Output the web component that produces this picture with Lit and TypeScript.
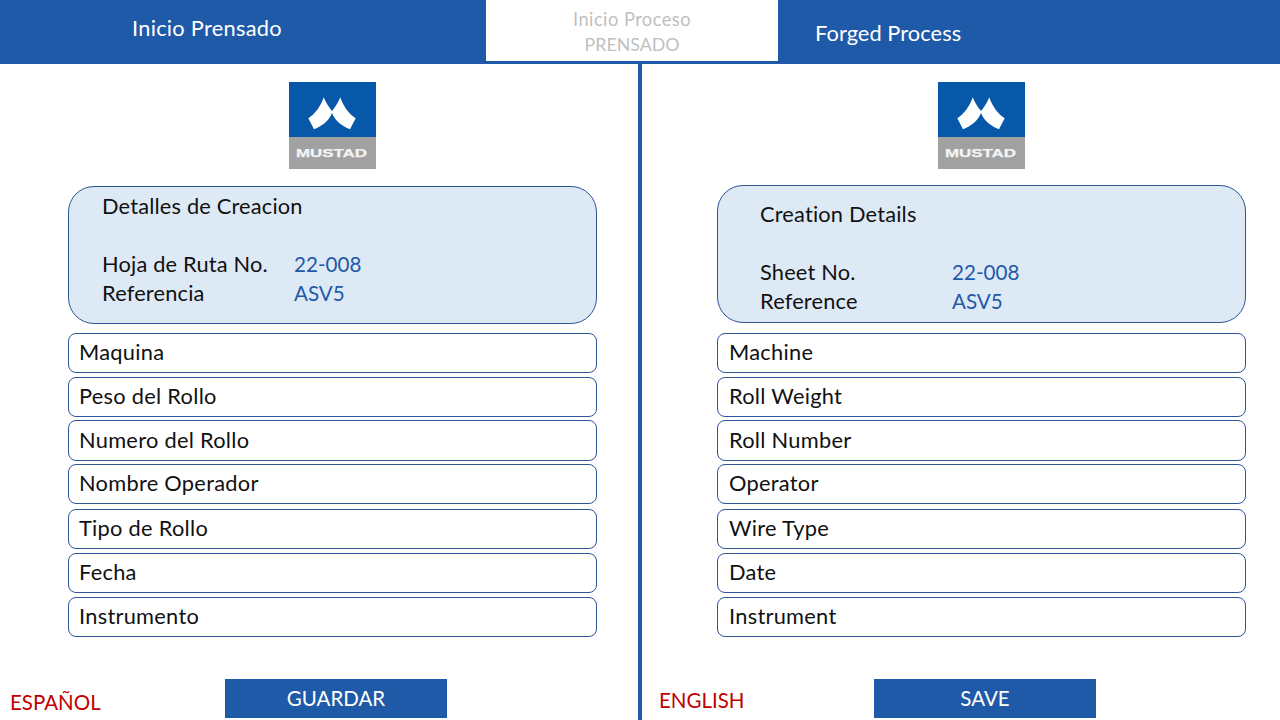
import { LitElement, css, html } from "lit";
import { customElement, property } from "lit/decorators.js";

interface PanelData {
  side: "es" | "en";
  title: string;
  sheetLabel: string;
  refLabel: string;
  fields: string[];
  lang: string;
  save: string;
}

const SPANISH: PanelData = {
  side: "es",
  title: "Detalles de Creacion",
  sheetLabel: "Hoja de Ruta No.",
  refLabel: "Referencia",
  fields: [
    "Maquina",
    "Peso del Rollo",
    "Numero del Rollo",
    "Nombre Operador",
    "Tipo de Rollo",
    "Fecha",
    "Instrumento",
  ],
  lang: "ESPAÑOL",
  save: "GUARDAR",
};

const ENGLISH: PanelData = {
  side: "en",
  title: "Creation Details",
  sheetLabel: "Sheet No.",
  refLabel: "Reference",
  fields: [
    "Machine",
    "Roll Weight",
    "Roll Number",
    "Operator",
    "Wire Type",
    "Date",
    "Instrument",
  ],
  lang: "ENGLISH",
  save: "SAVE",
};

@customElement("detail-panel")
export class DetailPanel extends LitElement {
  @property({ type: Object }) data: PanelData = SPANISH;

  renderLogo() {
    return html`<svg class="logo" viewBox="0 0 87 87" width="87" height="87">
      <rect width="87" height="55" fill="#0758a8"></rect>
      <rect y="55" width="87" height="32" fill="#a1a1a1"></rect>
      <path
        fill="#fff"
        d="M34.7 15.3 C36.5 20 39.5 25 43 29 C46.5 25 49.5 20 51.3 15.3 C54 24 60 32 66.7 36.3 L61 47.3 C53 44 46 39 43 31 C40 39 33 44 25 47.3 L19.3 36.3 C26 32 32 24 34.7 15.3 Z"
      ></path>
      <text class="logo__word" x="7" y="75" textLength="71" lengthAdjust="spacingAndGlyphs">MUSTAD</text>
    </svg>`;
  }

  render() {
    const d = this.data;
    return html`
      <section class="panel panel--${d.side}">
        <div class="panel__logo">${this.renderLogo()}</div>
        <div class="card">
          <div class="card__title">${d.title}</div>
          <div class="card__grid">
            <span>${d.sheetLabel}</span><span class="card__value">22-008</span>
            <span>${d.refLabel}</span><span class="card__value">ASV5</span>
          </div>
        </div>
        <div class="fields">
          ${d.fields.map((f) => html`<div class="field">${f}</div>`)}
        </div>
        <div class="footer">
          <span class="footer__lang">${d.lang}</span>
          <div class="footer__save">${d.save}</div>
        </div>
      </section>
    `;
  }

  static styles = css`
    :host {
      display: block;
      font-family: Lato, "Liberation Sans", sans-serif;
      font-size: 21.8px;
      letter-spacing: 0.28px;
      color: #111;
    }

    .panel {
      --inset: 68px;
      --card-top: 17px;
      --card-title-pad: 6px;
      --card-left: 33px;
      --field-left: 10px;
      --value-col: 192px;
      --save-left: 157px;
      --lang-left: 10px;
      --lang-top: 8px;
      padding: 18px 0 0 var(--inset);
    }

    .panel--en {
      --inset: 75px;
      --card-top: 16px;
      --card-title-pad: 15px;
      --card-left: 42px;
      --field-left: 11px;
      --lang-left: 17px;
      --lang-top: 6px;
    }

    .panel__logo {
      width: 529px;
      display: flex;
      justify-content: center;
    }

    .logo {
      display: block;
    }

    .logo__word {
      font-family: "Liberation Sans", sans-serif;
      font-weight: 700;
      font-size: 11px;
      letter-spacing: 0;
      fill: #f4f4f4;
      stroke: #f4f4f4;
      stroke-width: 0.25px;
    }

    .card {
      box-sizing: border-box;
      width: 529px;
      height: 138px;
      margin-top: var(--card-top);
      padding: var(--card-title-pad) 0 0 var(--card-left);
      border: 1px solid #2f5597;
      border-radius: 26px;
      background: #dee9f6;
      letter-spacing: 0.18px;
    }

    .card__title {
      line-height: 26px;
    }

    .card__grid {
      display: grid;
      grid-template-columns: var(--value-col) auto;
      grid-auto-rows: 29px;
      justify-content: start;
      align-items: baseline;
      margin-top: 31px;
      line-height: 28px;
    }

    .card__value {
      color: #1f5aa8;
      font-size: 20.6px;
      letter-spacing: 0;
    }

    .fields {
      display: flex;
      flex-direction: column;
      width: 529px;
      margin-top: 9px;
      gap: 4px;
    }

    .panel--en .fields {
      margin-top: 10px;
    }

    .field {
      box-sizing: border-box;
      height: 40px;
      padding-left: var(--field-left);
      border: 1px solid #2f5597;
      border-radius: 8px;
      line-height: 35px;
      background: #fff;
    }

    .field:nth-child(3) {
      height: 41px;
      margin-top: -1px;
      line-height: 37px;
    }

    .field:nth-child(4) {
      margin-top: -1px;
    }

    .field:nth-child(5) {
      margin-top: 1px;
    }

    .footer {
      display: flex;
      align-items: flex-start;
      margin: 42px 0 0 calc(var(--lang-left) - var(--inset));
      font-size: 20.5px;
      letter-spacing: 0;
    }

    .footer__lang {
      width: calc(var(--inset) + var(--save-left) - var(--lang-left));
      padding-top: var(--lang-top);
      line-height: 30px;
      color: #c00000;
    }

    .footer__save {
      width: 222px;
      height: 39px;
      line-height: 38px;
      text-align: center;
      color: #fff;
      background: #1f5aa8;
    }
  `;
}

@customElement("app-root")
export class AppRoot extends LitElement {
  render() {
    return html`
      <div class="page">
        <header class="header">
          <div class="header__left">Inicio Prensado</div>
          <div class="header__tab">
            <span class="header__tab-top">Inicio Proceso</span>
            <span class="header__tab-bottom">PRENSADO</span>
          </div>
          <div class="header__right">Forged Process</div>
        </header>
        <main class="body">
          <detail-panel .data=${SPANISH}></detail-panel>
          <div class="divider"></div>
          <detail-panel .data=${ENGLISH}></detail-panel>
        </main>
      </div>
    `;
  }

  static styles = css`
    :host {
      display: block;
      font-family: Lato, "Liberation Sans", sans-serif;
    }

    .page {
      width: 1280px;
      height: 720px;
      overflow: hidden;
      background: #fff;
    }

    .header {
      display: grid;
      grid-template-columns: 486px 292px 1fr;
      height: 64px;
      background: #1f5aa8;
      color: #fff;
      font-size: 21.8px;
    }

    .header__left {
      padding: 14px 0 0 132px;
      letter-spacing: 0.27px;
    }

    .header__right {
      padding: 19px 0 0 37px;
      letter-spacing: 0.07px;
    }

    .header__tab {
      display: flex;
      flex-direction: column;
      align-items: center;
      box-sizing: border-box;
      height: 61px;
      padding-top: 7px;
      background: #fff;
      color: #bfbfbf;
      line-height: 25px;
    }

    .header__tab-top {
      font-size: 18.3px;
      letter-spacing: 0.45px;
    }

    .header__tab-bottom {
      font-size: 17.8px;
    }

    .body {
      display: grid;
      grid-template-columns: 638px 4px 638px;
      height: 656px;
    }

    .divider {
      background: #1f5aa8;
    }
  `;
}
